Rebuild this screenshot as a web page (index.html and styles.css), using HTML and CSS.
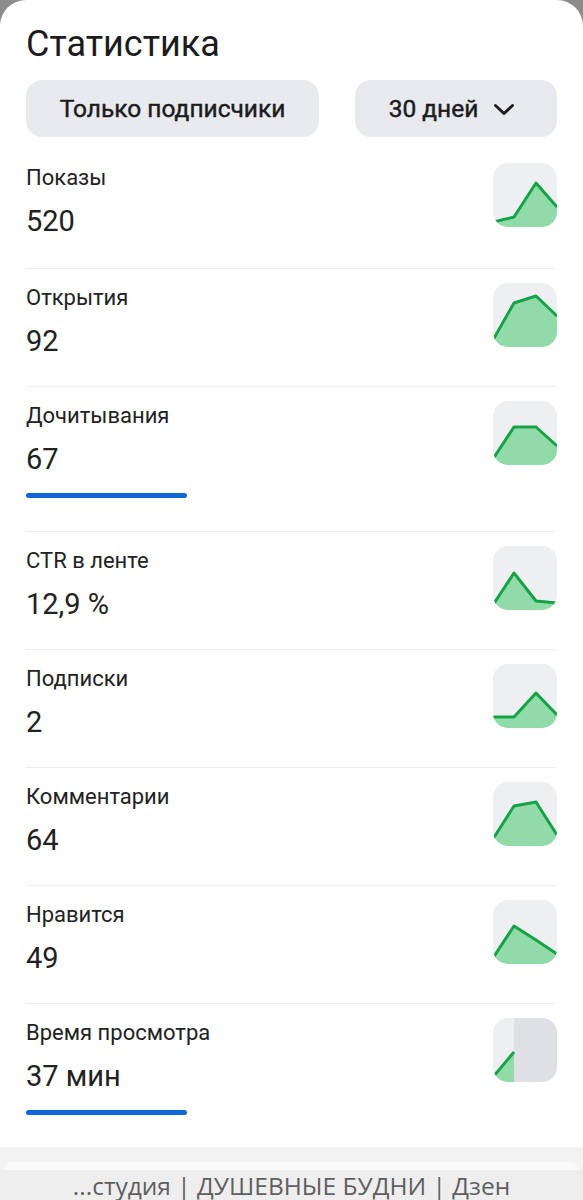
FILE: index.html
```html
<!DOCTYPE html>
<html lang="ru">
<head>
<meta charset="utf-8">
<title>Статистика</title>
<link rel="stylesheet" href="styles.css">
</head>
<body>
<div class="sheet">
  <h1 class="title">Статистика</h1>
  <div class="filters">
    <button class="chip chip-wide">Только подписчики</button>
    <button class="chip chip-period">30 дней
      <svg class="chev" viewBox="0 0 22 13" width="22" height="13"><polyline points="2.5,2.5 11,10.5 19.5,2.5" fill="none" stroke="#1f1f1f" stroke-width="3" stroke-linecap="round" stroke-linejoin="round"/></svg>
    </button>
  </div>
  <ul class="metrics">
    <li class="metric">
      <div class="metric-text"><div class="metric-label">Показы</div><div class="metric-value">520</div></div>
      <svg class="spark" viewBox="0 0 64 64" width="64" height="64"><polygon class="area" points="0,59 21,54 43,20 64,44 64,64 0,64"/><polyline class="line" points="0,59 21,54 43,20 64,44"/></svg>
    </li>
    <li class="metric">
      <div class="metric-text"><div class="metric-label">Открытия</div><div class="metric-value">92</div></div>
      <svg class="spark" viewBox="0 0 64 64" width="64" height="64"><polygon class="area" points="0,57 21,20 43,13 64,33 64,64 0,64"/><polyline class="line" points="0,57 21,20 43,13 64,33"/></svg>
    </li>
    <li class="metric">
      <div class="metric-text"><div class="metric-label">Дочитывания</div><div class="metric-value">67</div><div class="progress"></div></div>
      <svg class="spark" viewBox="0 0 64 64" width="64" height="64"><polygon class="area" points="0,58 21,26 43,26 64,45 64,64 0,64"/><polyline class="line" points="0,58 21,26 43,26 64,45"/></svg>
    </li>
    <li class="metric">
      <div class="metric-text"><div class="metric-label">CTR в ленте</div><div class="metric-value">12,9 %</div></div>
      <svg class="spark" viewBox="0 0 64 64" width="64" height="64"><polygon class="area" points="0,59 21,27 43,55 64,57 64,64 0,64"/><polyline class="line" points="0,59 21,27 43,55 64,57"/></svg>
    </li>
    <li class="metric">
      <div class="metric-text"><div class="metric-label">Подписки</div><div class="metric-value">2</div></div>
      <svg class="spark" viewBox="0 0 64 64" width="64" height="64"><polygon class="area" points="0,53 21,53 43,29 64,51 64,64 0,64"/><polyline class="line" points="0,53 21,53 43,29 64,51"/></svg>
    </li>
    <li class="metric">
      <div class="metric-text"><div class="metric-label">Комментарии</div><div class="metric-value">64</div></div>
      <svg class="spark" viewBox="0 0 64 64" width="64" height="64"><polygon class="area" points="0,57 21,24 43,20 64,53 64,64 0,64"/><polyline class="line" points="0,57 21,24 43,20 64,53"/></svg>
    </li>
    <li class="metric">
      <div class="metric-text"><div class="metric-label">Нравится</div><div class="metric-value">49</div></div>
      <svg class="spark" viewBox="0 0 64 64" width="64" height="64"><polygon class="area" points="0,58 21,26 43,40 64,54 64,64 0,64"/><polyline class="line" points="0,58 21,26 43,40 64,54"/></svg>
    </li>
    <li class="metric metric-last">
      <div class="metric-text"><div class="metric-label">Время просмотра</div><div class="metric-value">37 мин</div><div class="progress"></div></div>
      <svg class="spark" viewBox="0 0 64 64" width="64" height="64"><rect class="future" x="21" y="0" width="43" height="64"/><polygon class="area" points="0,59 21,34 21,64 0,64"/><polyline class="line" points="0,59 21,34"/></svg>
    </li>
  </ul>
</div>
<div class="browser">
  <div class="tab-edge"></div>
  <div class="urlbar">...студия | ДУШЕВНЫЕ БУДНИ | Дзен</div>
</div>
</body>
</html>
```

FILE: styles.css
```css
* { box-sizing: border-box; }
html, body { margin: 0; padding: 0; }
body {
  width: 583px;
  height: 1200px;
  overflow: hidden;
  background: #8c8c8c;
  font-family: Roboto, "Noto Sans", sans-serif;
  color: #1f1f1f;
}
.sheet {
  background: #fff;
  border-radius: 26px 26px 0 0;
  padding: 22px 26px 0;
}
.title {
  margin: 0;
  font-size: 36px;
  font-weight: 400;
  line-height: 44px;
  color: #1c1c1e;
}
.filters {
  display: flex;
  justify-content: space-between;
  margin-top: 14px;
}
.chip {
  height: 57px;
  border: 0;
  border-radius: 16px;
  background: #e9eaee;
  font-family: inherit;
  font-size: 24.5px;
  font-weight: 400;
  -webkit-text-stroke: 0.45px #1c1c1e;
  color: #1c1c1e;
  display: flex;
  align-items: center;
  justify-content: center;
  padding: 0;
}
.chip-wide { width: 293px; }
.chip-period { width: 202px; gap: 15px; padding-right: 8px; }
.chev { display: block; margin-top: 2px; }
.metrics {
  list-style: none;
  margin: 12px 0 0;
  padding: 0;
}
.metric {
  display: flex;
  justify-content: space-between;
  align-items: flex-start;
  padding-top: 14px;
  min-height: 118px;
  border-bottom: 1px solid #eeeeee;
}
.metric:first-child { min-height: 120px; }
.metric-last { border-bottom: 0; min-height: 143px; }
.metric-text { display: flex; flex-direction: column; }
.metric-label {
  font-size: 22px;
  line-height: 26px;
  margin-top: 2px;
  color: #222;
}
.metric-value {
  font-size: 29px;
  line-height: 36px;
  margin-top: 12px;
  color: #222;
}
.progress {
  width: 161px;
  height: 5px;
  border-radius: 3px;
  background: #0f67d6;
  margin-top: 16px;
  margin-bottom: 33px;
}
.metric-last .progress { margin-bottom: 0; }
.spark {
  display: block;
  width: 64px;
  height: 64px;
  border-radius: 15px;
  background: #eeeff1;
  overflow: hidden;
  flex: none;
}
.spark .area { fill: #90dba8; }
.spark .line { fill: none; stroke: #17a149; stroke-width: 3; stroke-linejoin: round; }
.spark .future { fill: #dfe0e3; }
.browser {
  background: #f3f3f3;
  height: 60px;
  padding-top: 15px;
}
.tab-edge {
  height: 8px;
  margin: 0 4px;
  background: #fafafa;
  border-radius: 14px 14px 0 0;
}
.urlbar {
  background: #eeeeee;
  height: 40px;
  text-align: center;
  font-family: "Open Sans", "Noto Sans", sans-serif;
  font-size: 24.5px;
  line-height: 32px;
  color: #5f5f5f;
  white-space: nowrap;
}
```
